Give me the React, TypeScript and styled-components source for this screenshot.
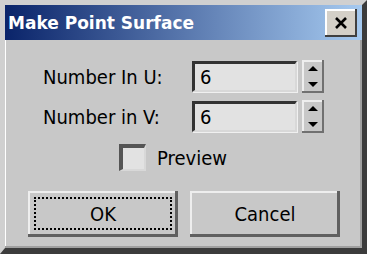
import styled, { createGlobalStyle } from "styled-components";

const GlobalStyle = createGlobalStyle`
  html, body {
    margin: 0;
    padding: 0;
    background: #c8c8c8;
  }
`;

const Window = styled.div`
  width: 367px;
  height: 254px;
  box-sizing: border-box;
  background: #c8c8c8;
  border-top: 5px solid #d0d0d0;
  border-left: 5px solid #d0d0d0;
  border-right: 5px solid #3c3c3c;
  border-bottom: 6px solid #3c3c3c;
  box-shadow: inset -2px -2px 0 #a0a0a0, inset 1px 1px 0 #ffffff;
  display: flex;
  flex-direction: column;
  font-family: "DejaVu Sans Condensed", "DejaVu Sans", sans-serif;
`;

const TitleBar = styled.div`
  height: 35px;
  display: flex;
  align-items: center;
  justify-content: space-between;
  padding: 0 5px 0 3px;
  background: linear-gradient(to right, #0a246a, #a6caf0);
`;

const Title = styled.span`
  color: #ffffff;
  font-family: "DejaVu Sans", sans-serif;
  font-weight: bold;
  font-size: 17px;
`;

const CloseButton = styled.div`
  width: 32px;
  height: 28px;
  box-sizing: border-box;
  background: #d4d0c8;
  box-shadow: inset -2px -2px 0 #404040, inset 2px 2px 0 #ffffff;
  display: flex;
  align-items: center;
  justify-content: center;
`;

const Body = styled.div`
  flex: 1;
  display: flex;
  flex-direction: column;
  padding: 20px 0 0 38px;
`;

const Fields = styled.div`
  display: grid;
  grid-template-columns: 144px 105px 22px;
  column-gap: 5px;
  row-gap: 7px;
  align-items: center;
`;

const Label = styled.span`
  font-size: 20px;
  color: #000000;
`;

const Input = styled.div`
  height: 31px;
  box-sizing: border-box;
  background: #e2e2e2;
  border-top: 3px solid #333333;
  border-left: 3px solid #333333;
  border-right: 2px solid #d8d8d8;
  border-bottom: 2px solid #d8d8d8;
  box-shadow: 1px 1px 0 #f0f0f0;
  padding-left: 5px;
  font-size: 20px;
  line-height: 26px;
  color: #000000;
`;

const Spinner = styled.div`
  height: 33px;
  box-sizing: border-box;
  display: flex;
  flex-direction: column;
  background: #c8c8c8;
  box-shadow: inset -2px -2px 0 #707070, inset 2px 2px 0 #eeeeee;
`;

const SpinHalf = styled.div`
  flex: 1;
  display: flex;
  align-items: center;
  justify-content: center;
`;

const Arrow = styled.div<{ $up?: boolean }>`
  width: 0;
  height: 0;
  border-left: 5px solid transparent;
  border-right: 5px solid transparent;
  ${(p) => (p.$up ? "border-bottom: 5px solid #000;" : "border-top: 5px solid #000;")}
`;

const CheckRow = styled.label`
  display: flex;
  align-items: center;
  gap: 11px;
  margin: 11px 0 0 76px;
  font-size: 20px;
`;

const CheckBox = styled.div`
  width: 27px;
  height: 27px;
  box-sizing: border-box;
  background: #e2e2e2;
  border-top: 4px solid #555555;
  border-left: 4px solid #555555;
  border-right: 2px solid #d8d8d8;
  border-bottom: 2px solid #d8d8d8;
`;

const Buttons = styled.div`
  display: flex;
  gap: 12px;
  margin: 20px 0 0 -15px;
`;

const Button = styled.div<{ $focused?: boolean }>`
  width: 150px;
  height: 46px;
  box-sizing: border-box;
  background: #c8c8c8;
  box-shadow: inset -3px -3px 0 #606060, inset 2px 2px 0 #eeeeee;
  display: flex;
  align-items: center;
  justify-content: center;
  font-size: 20px;
  position: relative;
  ${(p) =>
    p.$focused &&
    `&::after {
      content: "";
      position: absolute;
      inset: 6px 6px 7px 6px;
      border: 2px dotted #000;
    }`}
`;

export default function App() {
  return (
    <>
      <GlobalStyle />
      <Window>
        <TitleBar>
          <Title>Make Point Surface</Title>
          <CloseButton>
            <svg width="14" height="12" viewBox="0 0 14 12">
              <path d="M2 1 L12 11 M12 1 L2 11" stroke="#000" strokeWidth="2.6" />
            </svg>
          </CloseButton>
        </TitleBar>
        <Body>
          <Fields>
            <Label>Number In U:</Label>
            <Input>6</Input>
            <Spinner>
              <SpinHalf>
                <Arrow $up />
              </SpinHalf>
              <SpinHalf>
                <Arrow />
              </SpinHalf>
            </Spinner>
            <Label>Number in V:</Label>
            <Input>6</Input>
            <Spinner>
              <SpinHalf>
                <Arrow $up />
              </SpinHalf>
              <SpinHalf>
                <Arrow />
              </SpinHalf>
            </Spinner>
          </Fields>
          <CheckRow>
            <CheckBox />
            Preview
          </CheckRow>
          <Buttons>
            <Button $focused>OK</Button>
            <Button>Cancel</Button>
          </Buttons>
        </Body>
      </Window>
    </>
  );
}
